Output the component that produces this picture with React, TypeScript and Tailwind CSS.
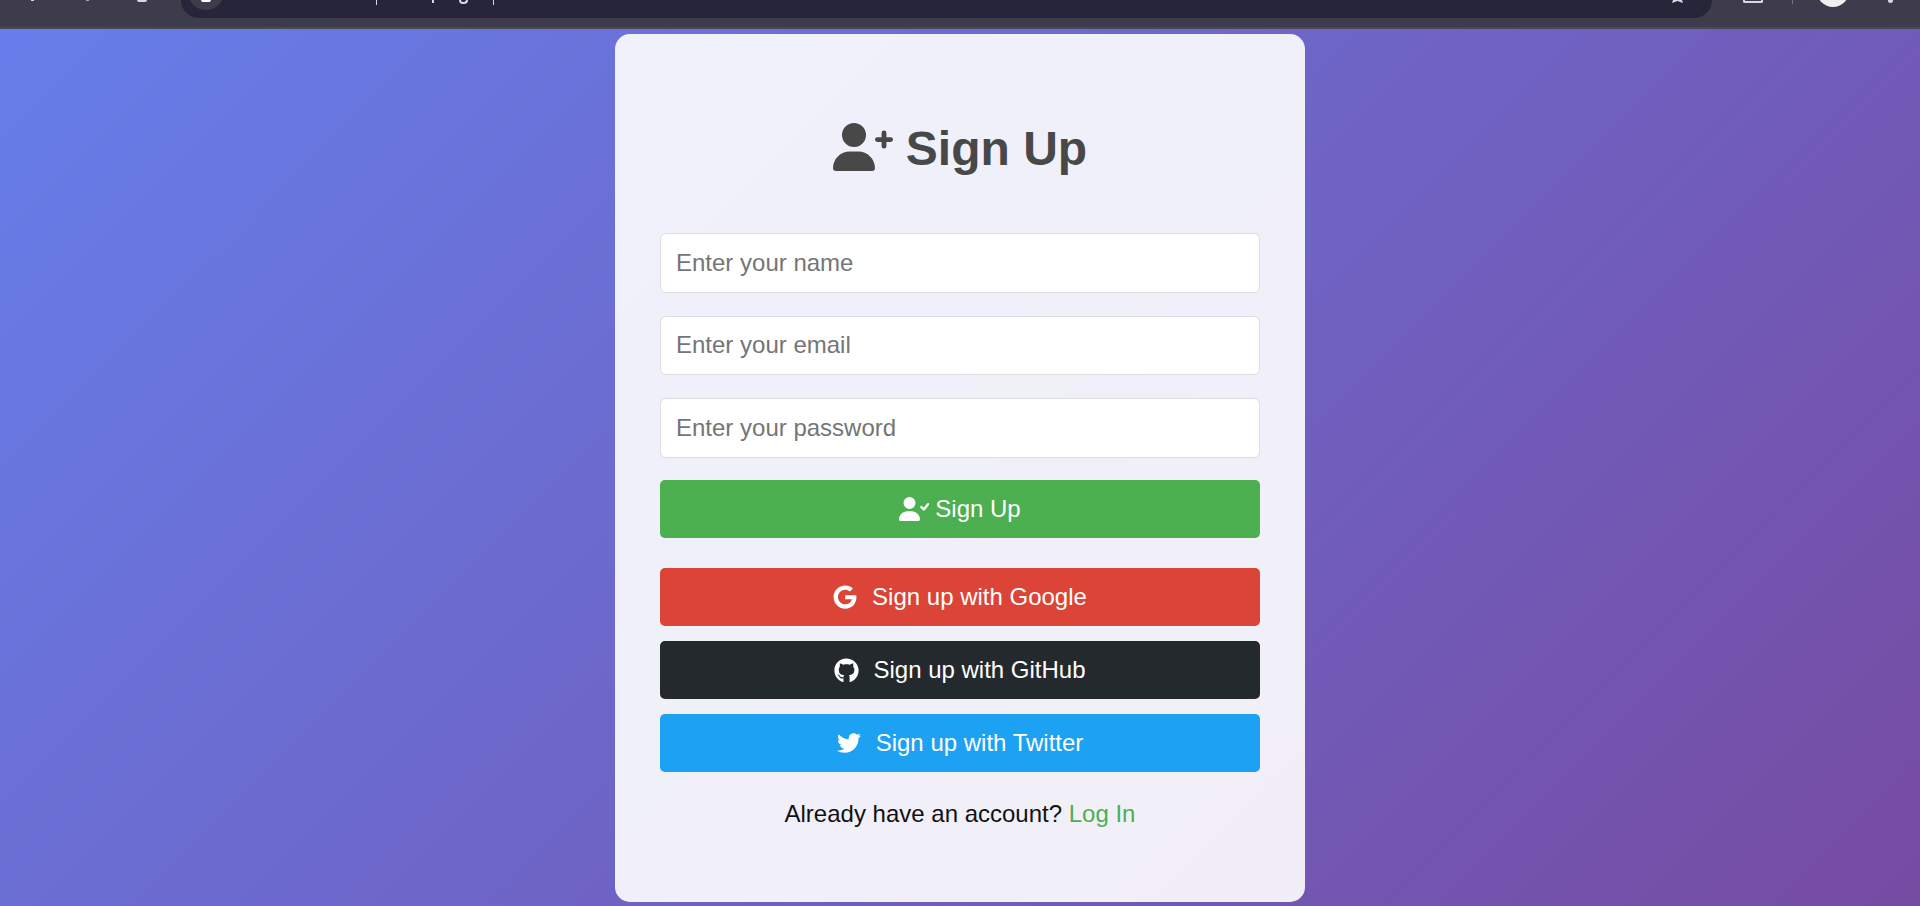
import type { ReactNode } from "react";
import { FaGoogle, FaGithub, FaTwitter } from "react-icons/fa6";

const fields = ["Enter your name", "Enter your email", "Enter your password"];

const person =
  "M96 128a128 128 0 1 1 256 0A128 128 0 1 1 96 128zM0 482.3C0 383.8 79.8 304 178.3 304h91.4C368.2 304 448 383.8 448 482.3c0 16.4-13.3 29.7-29.7 29.7H29.7C13.3 512 0 498.7 0 482.3z";

function UserPlusIcon({ className }: { className: string }) {
  return (
    <svg viewBox="0 0 640 512" className={className} fill="currentColor">
      <path d={person} />
      <path d="M544 107V247M474 177H614" fill="none" stroke="currentColor" strokeWidth="52" strokeLinecap="round" />
    </svg>
  );
}

function UserCheckIcon({ className }: { className: string }) {
  return (
    <svg viewBox="0 0 640 512" className={className} fill="currentColor">
      <path d={person} />
      <path d="M478 215L530 265L620 155" fill="none" stroke="currentColor" strokeWidth="52" strokeLinecap="round" strokeLinejoin="round" />
    </svg>
  );
}

function Social({ icon, label, bg, gap }: { icon: ReactNode; label: string; bg: string; gap: string }) {
  return (
    <button className={`flex h-[58px] w-full items-center justify-center rounded-[5px] text-[24px] text-white ${gap} ${bg}`}>
      {icon}
      <span>{label}</span>
    </button>
  );
}

export default function App() {
  return (
    <div className="flex h-[906px] flex-col overflow-hidden font-['Liberation_Sans',Arial,sans-serif]">
      <div className="flex h-[29px] shrink-0 items-start border-b-2 border-[#4a4757] bg-[#3e3b4d]">
        <div className="ml-[31px] h-[1px] w-[3px] bg-[#d8d6e0]" />
        <div className="ml-[52px] h-[1px] w-[3px] bg-[#a8a6b0]" />
        <div className="ml-[48px] h-[2px] w-[10px] rounded-b-full bg-[#d8d6e0]" />
        <div className="ml-[34px] flex h-[18px] w-[1531px] items-start rounded-b-[18px] bg-[#272539] pl-[7px]">
          <div className="-mt-[26px] flex h-[36px] w-[36px] items-end justify-center rounded-full bg-[#3e3b4d] pb-[8px]">
            <div className="h-[2px] w-[10px] rounded-b-full bg-white" />
          </div>
          <div className="ml-[152px] h-[5px] w-[1px] bg-[#d8d6e0]" />
          <div className="ml-[55px] h-[3px] w-[2px] bg-[#d8d6e0]" />
          <div className="ml-[25px] h-[4px] w-[9px] rounded-b-full border-2 border-t-0 border-[#d8d6e0]" />
          <div className="ml-[25px] h-[5px] w-[1px] bg-[#d8d6e0]" />
          <svg viewBox="0 0 15 3" className="ml-auto mr-[27px] h-[3px] w-[15px]" fill="#d8d6e0">
            <path d="M3 0H12L13 3L7.5 1L2 3Z" />
          </svg>
        </div>
        <div className="ml-[31px] h-[3px] w-[20px] rounded-b-[2px] border-2 border-t-0 border-[#d8d6e0]" />
        <div className="ml-[29px] h-[4px] w-[1px] bg-[#77748a]" />
        <div className="-mt-[25px] ml-[24px] h-[32px] w-[32px] rounded-full bg-[#f2f0ee]" />
        <div className="ml-[39px] h-[3px] w-[5px] rounded-b-full bg-[#d8d6e0]" />
      </div>
      <div className="flex flex-1 justify-center bg-[linear-gradient(135deg,#667eea,#764ba2)] pt-[5px]">
        <div className="h-[868px] w-[690px] rounded-[15px] bg-white/90 px-[45px] pt-[86px]">
          <h1 className="flex items-center justify-center gap-[13px] text-[48px] leading-[57px] font-bold text-[#484848]">
            <UserPlusIcon className="mb-[3px] h-[48px] w-[60px]" />
            <span>Sign Up</span>
          </h1>
          <div className="mt-[56px] flex flex-col gap-[23px]">
            {fields.map((f) => (
              <input
                key={f}
                placeholder={f}
                className="h-[59.5px] w-full rounded-[6px] border border-[#dddddd] bg-white px-[15px] text-[24px] placeholder:text-[#757575]"
              />
            ))}
          </div>
          <button className="mt-[22.5px] flex h-[58px] w-full items-center justify-center gap-[6px] rounded-[5px] bg-[#4caf50] text-[24px] text-white">
            <UserCheckIcon className="h-[24px] w-[30px]" />
            <span>Sign Up</span>
          </button>
          <div className="mt-[30px] flex flex-col gap-[15px]">
            <Social gap="gap-[15px]" bg="bg-[#db4437]" label="Sign up with Google" icon={<FaGoogle className="h-[24px] w-[24px]" />} />
            <Social gap="gap-[14px]" bg="bg-[#24292e]" label="Sign up with GitHub" icon={<FaGithub className="h-[25px] w-[25px]" />} />
            <Social gap="gap-[15px]" bg="bg-[#1da1f2]" label="Sign up with Twitter" icon={<FaTwitter className="h-[24px] w-[24px]" />} />
          </div>
          <p className="mt-[28px] text-center text-[24px] leading-[27px] text-[#111111]">
            Already have an account? <a className="text-[#4caf50]">Log In</a>
          </p>
        </div>
      </div>
    </div>
  );
}
